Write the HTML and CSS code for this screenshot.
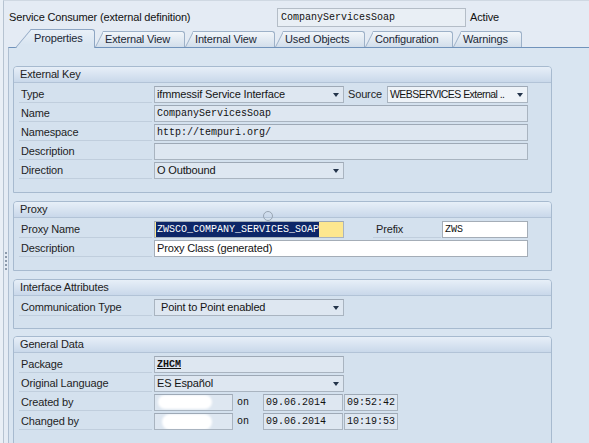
FILE: index.html
```html
<!DOCTYPE html>
<html lang="en">
<head>
<meta charset="utf-8">
<title>Service Consumer</title>
<link rel="stylesheet" href="styles.css">
</head>
<body>
<div class="grip"></div>
<div class="window">
  <div class="titlebar">
    <span class="title">Service Consumer (external definition)</span>
    <span class="field mono title-field">CompanyServicesSoap</span>
    <span class="status">Active</span>
  </div>
  <div class="tabs">
    <div class="tab active w80">Properties</div>
    <div class="tab w90">External View</div>
    <div class="tab w90">Internal View</div>
    <div class="tab w90">Used Objects</div>
    <div class="tab w88">Configuration</div>
    <div class="tab w69">Warnings</div>
  </div>
  <div class="panel">
    <section class="group">
      <div class="group-head">External Key</div>
      <div class="group-body">
        <div class="row">
          <span class="label">Type</span>
          <span class="field dd w190">ifmmessif Service Interface</span>
          <span class="plain src">Source</span>
          <span class="field dd light w141 condensed">WEBSERVICES External ..</span>
        </div>
        <div class="row">
          <span class="label">Name</span>
          <span class="field mono w374">CompanyServicesSoap</span>
        </div>
        <div class="row">
          <span class="label">Namespace</span>
          <span class="field mono w374">http://tempuri.org/</span>
        </div>
        <div class="row">
          <span class="label">Description</span>
          <span class="field w374"></span>
        </div>
        <div class="row">
          <span class="label">Direction</span>
          <span class="field dd w190">O Outbound</span>
        </div>
      </div>
    </section>

    <section class="group">
      <div class="group-head">Proxy</div>
      <span class="cursor-ring"></span>
      <div class="group-body">
        <div class="row">
          <span class="label">Proxy Name</span>
          <span class="field focus mono w190"><span class="selected">ZWSCO_COMPANY_SERVICES_SOAP</span></span>
          <span class="label prefix">Prefix</span>
          <span class="field edit mono w86">ZWS</span>
        </div>
        <div class="row">
          <span class="label">Description</span>
          <span class="field edit w374">Proxy Class (generated)</span>
        </div>
      </div>
    </section>

    <section class="group tight">
      <div class="group-head">Interface Attributes</div>
      <div class="group-body">
        <div class="row">
          <span class="label">Communication Type</span>
          <span class="field dd indent w190">Point to Point enabled</span>
        </div>
      </div>
    </section>

    <section class="group">
      <div class="group-head">General Data</div>
      <div class="group-body">
        <div class="row">
          <span class="label">Package</span>
          <span class="field mono w190"><span class="link">ZHCM</span></span>
        </div>
        <div class="row">
          <span class="label">Original Language</span>
          <span class="field dd w190">ES Español</span>
        </div>
        <div class="row">
          <span class="label">Created by</span>
          <span class="field mono w79"><span class="redact"></span></span>
          <span class="plain mono on">on</span>
          <span class="field mono w80">09.06.2014</span>
          <span class="field mono w54 gap1">09:52:42</span>
        </div>
        <div class="row">
          <span class="label">Changed by</span>
          <span class="field mono w79"><span class="redact r2"></span></span>
          <span class="plain mono on">on</span>
          <span class="field mono w80">09.06.2014</span>
          <span class="field mono w54 gap1">10:19:53</span>
        </div>
        <div class="row"></div>
      </div>
    </section>
  </div>
</div>
</body>
</html>
```
FILE: styles.css
```css
* { box-sizing: border-box; }

html, body {
  margin: 0;
  padding: 0;
}

body {
  width: 589px;
  height: 443px;
  overflow: hidden;
  position: relative;
  background: #e9eff6;
  font-family: "Liberation Sans", Arial, sans-serif;
  font-size: 11px;
  letter-spacing: -0.15px;
  color: #1e1e1e;
}

.grip {
  position: absolute;
  left: 5px;
  top: 252px;
  width: 2px;
  height: 18px;
  border-left: 2px dotted #8c9aab;
  z-index: 2;
}

.window {
  margin-left: 3px;
  height: 443px;
  overflow: hidden;
  border-left: 1px solid #b6c3d1;
  border-top: 1px solid #cfd8e2;
  background: #e4ebf4;
  display: flex;
  flex-direction: column;
}

/* title bar */
.titlebar {
  flex: none;
  height: 28px;
  padding: 7px 0 0 5px;
  display: flex;
  align-items: flex-start;
}

.title {
  width: 268px;
  line-height: 19px;
  color: #111;
}

.status {
  margin-left: 4px;
  line-height: 19px;
  color: #111;
}

/* tabs */
.tabs {
  flex: none;
  height: 18px;
  display: flex;
  align-items: flex-end;
  padding-left: 11px;
  position: relative;
  z-index: 1;
}

.tab {
  position: relative;
  isolation: isolate;
  height: 16px;
  line-height: 16px;
  padding-left: 10px;
  color: #1b2836;
  white-space: nowrap;
  flex: none;
}

.tab::before,
.tab::after {
  content: "";
  position: absolute;
  top: 0;
  bottom: 0;
  z-index: -1;
  background: linear-gradient(#f2f6fa, #d2deeb);
  border-top: 1px solid #9db1c8;
}

.tab::before {
  left: 0;
  width: 16px;
  border-left: 1px solid #9db1c8;
  transform: skewX(-27deg);
  transform-origin: bottom left;
}

.tab::after {
  left: 8px;
  right: 0;
  border-right: 1px solid #9db1c8;
  border-top-right-radius: 3px;
}

.tab.active {
  height: 19px;
  line-height: 18px;
  margin-bottom: -1px;
  padding-left: 19px;
}

.tab.active::before,
.tab.active::after {
  background: linear-gradient(#e9f0f8, #d9e5f1 80%);
  border-color: #8ea6c3;
}

.tab.active::before {
  width: 24px;
  transform: skewX(-40deg);
}

.tab.active::after {
  left: 16px;
}

.w80 { width: 80px; }
.w90 { width: 90px; }
.w88 { width: 88px; }
.w69 { width: 69px; }

/* panel */
.panel {
  flex: 1 0 auto;
  margin-left: 4px;
  border-left: 1px solid #afbfd1;
  border-top: 1px solid #7193bb;
  background: #d9e5f1;
  padding: 18px 0 0 4px;
}

.group {
  position: relative;
  width: 539px;
  border: 1px solid #a7bacf;
  border-radius: 4px 4px 0 0;
  background: #d4e1ee;
  padding-bottom: 12px;
  margin-bottom: 8px;
}

.group.tight {
  padding-bottom: 11px;
  margin-bottom: 7px;
}

.group-head {
  height: 16px;
  line-height: 15px;
  padding-left: 6px;
  border-bottom: 1px solid #b2c3d7;
  border-radius: 3px 3px 0 0;
  background: linear-gradient(#e7eff8, #c9d8ea);
  color: #222;
}

.group-body {
  padding: 2px 0 0 5px;
}

.row {
  display: flex;
  align-items: flex-start;
  height: 19px;
}

.row > * {
  margin-top: 1px;
}

.label {
  width: 133px;
  height: 17px;
  line-height: 16px;
  margin-right: 2px;
  padding-left: 2px;
  border-bottom: 1px solid #c0cedd;
  color: #1e1e1e;
  flex: none;
  white-space: nowrap;
}

.plain {
  height: 17px;
  line-height: 17px;
  flex: none;
}

.src {
  width: 43px;
  padding-left: 4px;
}

.prefix {
  width: 68px;
  margin-left: 29px;
  margin-right: 1px;
  padding-left: 3px;
}

.on {
  width: 30px;
  padding-left: 4px;
}

/* fields */
.field {
  position: relative;
  display: block;
  flex: none;
  height: 17px;
  line-height: 15px;
  padding: 0 2px;
  border: 1px solid #a9b4c0;
  border-top-color: #9ea9b6;
  background: #dee7f1;
  white-space: nowrap;
  overflow: hidden;
  color: #141414;
}

.title-field {
  width: 189px;
  height: 19px;
  line-height: 17px;
  padding-left: 3px;
  background: #e9eff5;
  border-color: #b4bdc7;
}

.mono {
  font-family: "Liberation Mono", "Courier New", monospace;
  font-size: 10px;
  letter-spacing: 0;
  color: #111;
}

.field.edit {
  background: #fff;
  border-color: #a4adb7;
}

.field.light {
  background: #eef3f8;
}

.field.focus {
  background: #fde78f;
  padding-left: 1px;
}

.selected {
  display: inline-block;
  height: 15px;
  padding-left: 1px;
  background: #0d2668;
  color: #fff;
}

.field.dd {
  padding-right: 14px;
}

.field.dd::after {
  content: "";
  position: absolute;
  right: 4px;
  top: 6px;
  border-left: 3.5px solid transparent;
  border-right: 3.5px solid transparent;
  border-top: 4px solid #23344a;
}

.field.indent {
  padding-left: 6px;
}

.condensed {
  font-size: 10.5px;
  letter-spacing: -0.55px;
}

.link {
  font-weight: bold;
  text-decoration: underline;
}

.redact {
  position: absolute;
  left: 3px;
  top: 0;
  width: 54px;
  height: 14px;
  border-radius: 8px;
  background: #fff;
  filter: blur(1.2px);
}

.redact.r2 {
  left: 7px;
  width: 50px;
  height: 16px;
}

.w190 { width: 190px; }
.w141 { width: 141px; }
.w374 { width: 374px; }
.w86 { width: 86px; }
.w79 { width: 79px; }
.w80 { width: 80px; }
.w54 { width: 54px; }
.gap1 { margin-left: 1px; }

.cursor-ring {
  position: absolute;
  left: 249px;
  top: 9px;
  width: 10px;
  height: 10px;
  border: 1px solid #98a5b3;
  border-radius: 50%;
  z-index: 2;
}
```
